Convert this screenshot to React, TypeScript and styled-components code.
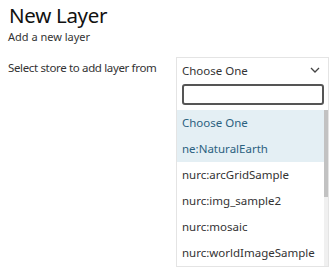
import styled, { createGlobalStyle } from "styled-components"

const Global = createGlobalStyle`
  body {
    margin: 0;
    background: #ffffff;
    font-family: "Noto Sans", "Liberation Sans", sans-serif;
    color: #222222;
  }
`

const Page = styled.div`
  padding: 0 0 0 8px;
  width: 329px;
  height: 269px;
  box-sizing: border-box;
  overflow: hidden;
`

const Title = styled.h1`
  margin: 0;
  padding: 2px 0 0 1px;
  font-size: 20.5px;
  font-weight: 400;
  letter-spacing: -0.3px;
  line-height: 27px;
  color: #111111;
`

const Subtitle = styled.div`
  font-size: 11px;
  line-height: 16px;
  color: #333333;
`

const Row = styled.div`
  display: flex;
  margin-top: 12px;
`

const Label = styled.label`
  width: 168px;
  font-size: 11.5px;
  letter-spacing: -0.35px;
  line-height: 22px;
  color: #333333;
`

const Combo = styled.div`
  width: 153px;
  display: flex;
  flex-direction: column;
`

const Select = styled.div`
  height: 24px;
  display: flex;
  align-items: center;
  justify-content: space-between;
  padding: 0 8px 0 5px;
  border: 1px solid #e4e4e4;
  border-bottom: none;
  font-size: 11.5px;
  color: #333333;
`

const Panel = styled.div`
  border: 1px solid #e4e4e4;
  border-top: none;
  display: flex;
  flex-direction: column;
`

const SearchWrap = styled.div`
  padding: 2px 4px 5px 5px;
`

const Search = styled.input`
  display: block;
  width: 100%;
  height: 21px;
  box-sizing: border-box;
  border: 2px solid #555555;
  border-radius: 3px;
  outline: none;
`

const ListArea = styled.div`
  display: flex;
  height: 156px;
`

const List = styled.ul`
  flex: 1;
  margin: 0;
  padding: 0;
  list-style: none;
`

const Item = styled.li<{ $active?: boolean }>`
  height: 26px;
  line-height: 26px;
  padding-left: 5px;
  font-size: 11.5px;
  background: ${({ $active }) => ($active ? "#e4eff4" : "transparent")};
  color: ${({ $active }) => ($active ? "#2b6180" : "#333333")};
`

const Track = styled.div`
  width: 4px;
  background: #f0f0f0;
`

const Thumb = styled.div`
  height: 87px;
  background: #c2c2c2;
`

const Chevron = () => (
  <svg width="10" height="6" viewBox="0 0 10 6" fill="none">
    <path d="M1 1l4 4 4-4" stroke="#444" strokeWidth="1.3" />
  </svg>
)

const items = [
  { name: "Choose One", active: true },
  { name: "ne:NaturalEarth", active: true },
  { name: "nurc:arcGridSample" },
  { name: "nurc:img_sample2" },
  { name: "nurc:mosaic" },
  { name: "nurc:worldImageSample" },
]

export default function App() {
  return (
    <Page>
      <Global />
      <Title>New Layer</Title>
      <Subtitle>Add a new layer</Subtitle>
      <Row>
        <Label>Select store to add layer from</Label>
        <Combo>
          <Select>
            <span>Choose One</span>
            <Chevron />
          </Select>
          <Panel>
            <SearchWrap>
              <Search />
            </SearchWrap>
            <ListArea>
              <List>
                {items.map((it) => (
                  <Item key={it.name} $active={it.active}>
                    {it.name}
                  </Item>
                ))}
              </List>
              <Track>
                <Thumb />
              </Track>
            </ListArea>
          </Panel>
        </Combo>
      </Row>
    </Page>
  )
}
